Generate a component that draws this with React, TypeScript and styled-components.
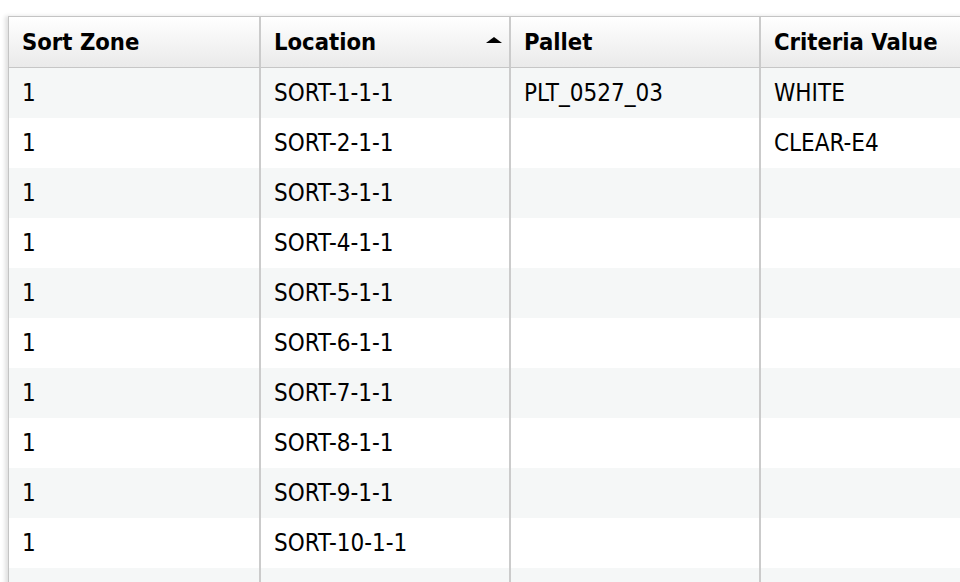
import React from "react";
import styled, { createGlobalStyle } from "styled-components";

const GlobalStyle = createGlobalStyle`
  html, body {
    margin: 0;
    padding: 0;
    background: #ffffff;
    overflow: hidden;
  }
  body {
    font-family: "DejaVu Sans Condensed", "DejaVu Sans", Verdana, sans-serif;
  }
`;

const Page = styled.div`
  padding: 16px 0 0 8px;
  width: 960px;
  height: 582px;
  box-sizing: border-box;
  overflow: hidden;
`;

const Grid = styled.div`
  display: grid;
  grid-template-columns: 252px 250px 250px 250px;
  width: max-content;
  border-top: 1px solid #c4c4c4;
  border-left: 1px solid #c4c4c4;
  box-shadow: -3px 0 4px rgba(0, 0, 0, 0.12);
  color: #000;
`;

const HeaderCell = styled.div<{ $last?: boolean }>`
  position: relative;
  display: flex;
  align-items: center;
  padding-left: 13px;
  padding-bottom: 1px;
  box-sizing: border-box;
  background: linear-gradient(#ffffff, #eaeaea);
  border-bottom: 1px solid #c6c6c6;
  border-right: ${(p) => (p.$last ? "none" : "2px solid #cbcbcb")};
  font-size: 23.6px;
  font-weight: bold;
  height: 51px;
`;

const SortArrow = styled.span`
  position: absolute;
  right: 7px;
  top: 20px;
  width: 0;
  height: 0;
  border-left: 8px solid transparent;
  border-right: 8px solid transparent;
  border-bottom: 6px solid #000;
`;

const Cell = styled.div<{ $striped: boolean; $last?: boolean }>`
  height: 50px;
  display: flex;
  align-items: center;
  padding-left: 13px;
  padding-bottom: 1px;
  box-sizing: border-box;
  background: ${(p) => (p.$striped ? "#f5f7f7" : "#ffffff")};
  border-right: ${(p) => (p.$last ? "none" : "2px solid #cbcbcb")};
  font-size: 24px;
  white-space: nowrap;
`;

type Row = { zone: string; location: string; pallet: string; criteria: string };

const rows: Row[] = [
  { zone: "1", location: "SORT-1-1-1", pallet: "PLT_0527_03", criteria: "WHITE" },
  { zone: "1", location: "SORT-2-1-1", pallet: "", criteria: "CLEAR-E4" },
  { zone: "1", location: "SORT-3-1-1", pallet: "", criteria: "" },
  { zone: "1", location: "SORT-4-1-1", pallet: "", criteria: "" },
  { zone: "1", location: "SORT-5-1-1", pallet: "", criteria: "" },
  { zone: "1", location: "SORT-6-1-1", pallet: "", criteria: "" },
  { zone: "1", location: "SORT-7-1-1", pallet: "", criteria: "" },
  { zone: "1", location: "SORT-8-1-1", pallet: "", criteria: "" },
  { zone: "1", location: "SORT-9-1-1", pallet: "", criteria: "" },
  { zone: "1", location: "SORT-10-1-1", pallet: "", criteria: "" },
  { zone: "", location: "", pallet: "", criteria: "" },
];

export default function App() {
  return (
    <>
      <GlobalStyle />
      <Page>
        <Grid>
          <HeaderCell>Sort Zone</HeaderCell>
          <HeaderCell>
            Location
            <SortArrow />
          </HeaderCell>
          <HeaderCell>Pallet</HeaderCell>
          <HeaderCell $last>Criteria Value</HeaderCell>
          {rows.map((r, i) => {
            const striped = i % 2 === 0;
            return (
              <React.Fragment key={i}>
                <Cell $striped={striped}>{r.zone}</Cell>
                <Cell $striped={striped}>{r.location}</Cell>
                <Cell $striped={striped}>{r.pallet}</Cell>
                <Cell $striped={striped} $last>
                  {r.criteria}
                </Cell>
              </React.Fragment>
            );
          })}
        </Grid>
      </Page>
    </>
  );
}
